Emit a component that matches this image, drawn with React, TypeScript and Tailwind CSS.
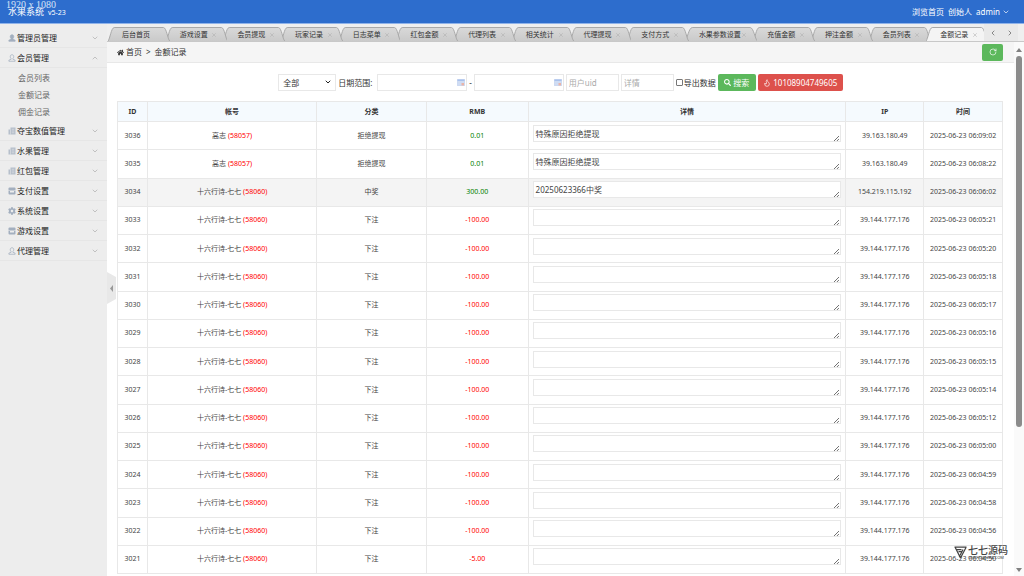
import { useState } from 'react';
import { ChevronDown, ChevronLeft, ChevronRight, ChevronUp, Flame, RotateCw, X } from 'lucide-react';
import { FaCog, FaHome, FaSearch } from 'react-icons/fa';

interface MenuItem {
  label: string;
  icon: 'admin' | 'user' | 'paper' | 'card' | 'cog';
  children?: string[];
}

interface LogRow {
  id: number;
  name: string;
  uid: number;
  type: string;
  amount: string;
  detail: string;
  ip: string;
  time: string;
}

const menu: MenuItem[] = [
  { label: '管理员管理', icon: 'admin' },
  { label: '会员管理', icon: 'user', children: ['会员列表', '金额记录', '佣金记录'] },
  { label: '夺宝数值管理', icon: 'paper' },
  { label: '水果管理', icon: 'paper' },
  { label: '红包管理', icon: 'paper' },
  { label: '支付设置', icon: 'card' },
  { label: '系统设置', icon: 'cog' },
  { label: '游戏设置', icon: 'card' },
  { label: '代理管理', icon: 'user' },
];

const tabs = [
  '后台首页', '游戏设置', '会员提现', '玩家记录', '日志菜单', '红包金额', '代理列表', '相关统计',
  '代理提现', '支付方式', '水果参数设置', '充值金额', '押注金额', '会员列表', '金额记录',
];

const bet = (id: number, time: string, amount = '-100.00'): LogRow => ({
  id,
  name: '十六行诗-七七',
  uid: 58060,
  type: '下注',
  amount,
  detail: '',
  ip: '39.144.177.176',
  time: `2025-06-23 ${time}`,
});

const rows: LogRow[] = [
  { id: 3036, name: '高志', uid: 58057, type: '拒绝提现', amount: '0.01', detail: '特殊原因拒绝提现', ip: '39.163.180.49', time: '2025-06-23 06:09:02' },
  { id: 3035, name: '高志', uid: 58057, type: '拒绝提现', amount: '0.01', detail: '特殊原因拒绝提现', ip: '39.163.180.49', time: '2025-06-23 06:08:22' },
  { id: 3034, name: '十六行诗-七七', uid: 58060, type: '中奖', amount: '300.00', detail: '20250623366中奖', ip: '154.219.115.192', time: '2025-06-23 06:06:02' },
  bet(3033, '06:05:21'),
  bet(3032, '06:05:20'),
  bet(3031, '06:05:18'),
  bet(3030, '06:05:17'),
  bet(3029, '06:05:16'),
  bet(3028, '06:05:15'),
  bet(3027, '06:05:14'),
  bet(3026, '06:05:12'),
  bet(3025, '06:05:00'),
  bet(3024, '06:04:59'),
  bet(3023, '06:04:58'),
  bet(3022, '06:04:56'),
  bet(3021, '06:04:50', '-5.00'),
];

function MenuIcon({ icon }: { icon: MenuItem['icon'] }) {
  if (icon === 'cog') return <FaCog className="size-2" />;
  if (icon === 'paper') {
    return (
      <svg viewBox="0 0 16 16" className="size-2">
        <path d="M5 1h10v14H1V5h4z" fill="currentColor" fillOpacity=".75" />
        <path d="M5 5v10M7.500 4.500h5M7.500 8h5M7.500 11.500h5" stroke="#ededed" strokeWidth="1" />
      </svg>
    );
  }
  if (icon === 'card') {
    return (
      <svg viewBox="0 0 16 16" className="size-2" fill="currentColor">
        <path d="M3 1h10a2 2 0 0 1 2 2v3H1V3a2 2 0 0 1 2-2z" />
        <path d="M1 7h14v6a2 2 0 0 1-2 2H3a2 2 0 0 1-2-2zM4 8v3h8V8z" fillRule="evenodd" />
      </svg>
    );
  }
  const solid = icon === 'admin';
  return (
    <svg viewBox="0 0 16 16" className="size-2" fill={solid ? 'currentColor' : 'none'} stroke="currentColor" strokeWidth="1.5">
      <path d="M8 1.500c2.300 0 3.500 1.600 3.500 3.800 0 1.700-.7 3-1.700 3.800v1.400l4.400 1.800v2.200H1.800v-2.200l4.400-1.800V9.100C5.200 8.300 4.500 7 4.500 5.300 4.500 3.100 5.700 1.500 8 1.500z" />
    </svg>
  );
}

function Header() {
  return (
    <header className="relative flex h-6 shrink-0 items-center justify-between border-b border-[#8fb3ea] bg-[#2d6dcd] px-2 text-white">
      <div className="flex items-baseline gap-1 pt-0.5">
        <h1 className="text-[9px] leading-3">水果系统</h1>
        <span className="text-[7px] leading-3">v5-23</span>
      </div>
      <nav className="flex items-center gap-1 pr-1.5">
        <a href="#home">浏览首页</a>
        <span>创始人</span>
        <button type="button" className="flex items-center gap-0.5">
          admin
          <ChevronDown className="size-2" />
        </button>
      </nav>
      <span className="absolute top-0 left-1.5 font-['Liberation_Serif',serif] text-[10px] leading-[9px] text-[#d5e3f8]">
        1920 x 1080
      </span>
    </header>
  );
}

function Sidebar() {
  return (
    <aside className="w-[107px] shrink-0 bg-[#ededed] pt-1">
      <ul>
        {menu.map((item) => (
          <li key={item.label}>
            <button
              type="button"
              className="flex h-5 w-full items-center gap-px border-b border-[#e6e6e6] pr-2 pl-2 text-[#222]"
            >
              <span className="text-[#a3afbf]">
                <MenuIcon icon={item.icon} />
              </span>
              <span className="flex-1 text-left">{item.label}</span>
              {item.children ? (
                <ChevronUp className="size-2 text-[#aaa]" />
              ) : (
                <ChevronDown className="size-2 text-[#aaa]" />
              )}
            </button>
            {item.children && (
              <ul className="pt-px pb-px">
                {item.children.map((child) => (
                  <li key={child}>
                    <a href="#child" className="block pl-[18px] leading-[17px] text-[#666]">
                      {child}
                    </a>
                  </li>
                ))}
              </ul>
            )}
          </li>
        ))}
      </ul>
    </aside>
  );
}

function TabBar({ active, onSelect }: { active: string; onSelect: (tab: string) => void }) {
  return (
    <div className="flex h-[18px] shrink-0 items-end border-b border-[#c8c8c8] bg-[#efefef] pl-px">
      <div className="isolate flex flex-1">
        {tabs.map((tab, i) => {
          const isActive = tab === active;
          return (
            <div
              key={tab}
              className={`relative flex h-3.5 basis-0 items-center pt-px pl-3.5 ${tab.length > 4 ? 'grow-[71]' : 'grow-[57]'}`}
              style={{ zIndex: isActive ? tabs.length + 1 : tabs.length - i }}
            >
              <svg
                viewBox="0 0 60 14"
                preserveAspectRatio="none"
                className="absolute inset-y-0 left-0 -z-10 h-full w-[calc(100%+4px)]"
              >
                <defs>
                  <linearGradient id={`tab-${i}`} x1="0" y1="0" x2="0" y2="1">
                    <stop offset="0" stopColor={isActive ? '#f4f4f4' : '#d9d9d9'} />
                    <stop offset="1" stopColor={isActive ? '#f4f4f4' : '#cacaca'} />
                  </linearGradient>
                </defs>
                <path
                  d="M0 14C2 12 3 1 6 .5H54C57 1 58 12 60 14"
                  fill={`url(#tab-${i})`}
                  stroke="#a9a9a9"
                  strokeWidth="1"
                  vectorEffect="non-scaling-stroke"
                />
              </svg>
              <button
                type="button"
                onClick={() => onSelect(tab)}
                className="flex-1 text-left text-[7px] whitespace-nowrap text-[#333]"
              >
                {tab}
              </button>
              {i > 0 && (
                <button type="button" aria-label={`关闭 ${tab}`} className="pr-1.5 text-[#aaa]">
                  <X className="size-1.5" />
                </button>
              )}
            </div>
          );
        })}
      </div>
      <div className="z-10 mr-1.5 flex h-full w-[34px] items-center justify-around bg-[#e9e9e9] text-[#555]">
        <button type="button" aria-label="向左">
          <ChevronLeft className="size-2" />
        </button>
        <button type="button" aria-label="向右">
          <ChevronRight className="size-2" />
        </button>
      </div>
    </div>
  );
}

function CalendarIcon() {
  return (
    <svg viewBox="0 0 16 14" className="h-[7px] w-2 shrink-0">
      <rect x=".5" y=".5" width="15" height="13" rx="1" fill="#cfdcf3" stroke="#b4c7ea" />
      <path d="M1 1h14v3H1z" fill="#a9c1ec" />
      <path d="M9 8h5v5H9z" fill="#eab4a8" />
    </svg>
  );
}

function DateField({ id, label }: { id: string; label: string }) {
  return (
    <span className="flex h-[17px] w-[90px] items-center border border-[#e8e8e8] bg-white pr-px">
      <input id={id} type="text" aria-label={label} className="h-full w-full min-w-0 px-1 outline-none" />
      <CalendarIcon />
    </span>
  );
}

function SearchForm() {
  return (
    <form className="flex items-center justify-center gap-0.5 pt-[11px] pb-2.5" onSubmit={(e) => e.preventDefault()}>
      <div className="relative">
        <select
          aria-label="分类"
          className="h-[17px] w-[58px] appearance-none border border-[#e8e8e8] bg-white pl-1 outline-none"
        >
          <option>全部</option>
        </select>
        <ChevronDown className="pointer-events-none absolute top-1 right-1 size-2 text-[#222]" strokeWidth={3} />
      </div>
      <label htmlFor="date-from" className="w-[37px] whitespace-nowrap">
        日期范围:
      </label>
      <DateField id="date-from" label="开始日期" />
      <span>-</span>
      <DateField id="date-to" label="结束日期" />
      <input
        type="text"
        aria-label="用户uid"
        placeholder="用户uid"
        className="h-[17px] w-[53px] border border-[#e8e8e8] px-0.5 outline-none placeholder:text-[#aaa]"
      />
      <input
        type="text"
        aria-label="详情"
        placeholder="详情"
        className="h-[17px] w-[53px] border border-[#e8e8e8] px-0.5 outline-none placeholder:text-[#aaa]"
      />
      <label className="flex items-center gap-px whitespace-nowrap">
        <input type="checkbox" className="size-[7px] appearance-none rounded-[1px] border border-[#777] checked:bg-[#2d6dcd]" />
        导出数据
      </label>
      <button type="submit" className="flex h-[17px] w-[38px] items-center justify-center gap-0.5 rounded-xs bg-[#5cb85c] text-white">
        <FaSearch className="size-[7px]" />
        搜索
      </button>
      <button type="button" className="flex h-[17px] w-[85px] items-center justify-center gap-0.5 rounded-xs bg-[#dd514c] text-white">
        <Flame className="size-2" />
        10108904749605
      </button>
    </form>
  );
}

function LogTable() {
  return (
    <table className="h-full w-full table-fixed border-collapse text-center text-[7px] leading-3 text-[#444]">
      <colgroup>
        <col className="w-[3.4%]" />
        <col className="w-[19.1%]" />
        <col className="w-[12.4%]" />
        <col className="w-[11.5%]" />
        <col className="w-[35.9%]" />
        <col className="w-[8.8%]" />
        <col className="w-[8.9%]" />
      </colgroup>
      <thead>
        <tr className="h-5 bg-[#f5fafe] text-[#333]">
          {['ID', '帐号', '分类', 'RMB', '详情', 'IP', '时间'].map((title) => (
            <th key={title} className="h-5 border border-[#e8e8e8] p-0 font-bold">
              {title}
            </th>
          ))}
        </tr>
      </thead>
      <tbody>
        {rows.map((row) => (
          <tr key={row.id} className={row.id === 3034 ? 'bg-[#f4f4f4]' : 'bg-white'}>
            <td className="border border-[#e8e8e8] p-0">{row.id}</td>
            <td className="border border-[#e8e8e8] p-0">
              {row.name} <span className="text-[#f00]">({row.uid})</span>
            </td>
            <td className="border border-[#e8e8e8] p-0">{row.type}</td>
            <td className={`border border-[#e8e8e8] p-0 ${row.amount.startsWith('-') ? 'text-[#f00]' : 'text-[#008000]'}`}>
              {row.amount}
            </td>
            <td className="border border-[#e8e8e8] px-1 pt-0 pb-[5px]">
              <div className="relative h-[17px]">
                <textarea
                  aria-label={`详情 ${row.id}`}
                  defaultValue={row.detail}
                  className="block h-full w-full resize-none overflow-hidden border border-[#e8e8e8] bg-white px-0.5 text-[8px] leading-[15px] outline-none"
                />
                <svg viewBox="0 0 6 6" className="absolute right-0.5 bottom-px size-[5px]" stroke="#555" fill="none">
                  <path d="M0 6L6 0M3.500 6L6 3.500" />
                </svg>
              </div>
            </td>
            <td className="border border-[#e8e8e8] p-0">{row.ip}</td>
            <td className="border border-[#e8e8e8] p-0 whitespace-nowrap">{row.time}</td>
          </tr>
        ))}
      </tbody>
    </table>
  );
}

function ScrollBar() {
  return (
    <div className="flex w-2.5 shrink-0 flex-col items-center bg-[#fafafa] pt-1.5 pb-1">
      <svg viewBox="0 0 6 4" className="h-1 w-1.5" fill="#808080">
        <path d="M3 0l3 4H0z" />
      </svg>
      <div className="flex w-full flex-1 justify-center pt-1 pb-1">
        <div className="h-[73%] w-1.5 rounded-full bg-[#8b8b8b]" />
      </div>
      <svg viewBox="0 0 6 4" className="h-1 w-1.5" fill="#808080">
        <path d="M0 0h6L3 4z" />
      </svg>
    </div>
  );
}

function Watermark() {
  return (
    <div className="pointer-events-none absolute right-4 bottom-4 flex items-center gap-px text-[#444]">
      <svg viewBox="0 0 26 26" className="size-[13px]" fill="none" stroke="currentColor" strokeWidth="2.500">
        <path d="M1 2h24M4 7h11M13 24L2 2M13 24L24 3M18 7l-6 12M9 11h6" />
      </svg>
      <div className="flex flex-col">
        <span className="text-[10px] leading-[11px] font-medium">七七源码</span>
        <span className="text-[4px] leading-[4px] whitespace-nowrap">QIQIYUANMA.COM</span>
      </div>
    </div>
  );
}

export default function App() {
  const [active, setActive] = useState('金额记录');

  return (
    <div className="relative flex h-screen flex-col overflow-hidden bg-white font-['Noto_Sans','Noto_Sans_CJK_SC',sans-serif] text-[8px] leading-3 text-[#333]">
      <Header />
      <div className="flex min-h-0 flex-1">
        <Sidebar />
        <div className="relative flex min-w-0 flex-1 flex-col">
          <TabBar active={active} onSelect={setActive} />
          <div className="flex min-h-0 flex-1">
            <main className="flex min-w-0 flex-1 flex-col">
              <div className="flex h-[21px] shrink-0 items-center justify-between border-b border-[#e8e8e8] bg-[#f5f5f5] pr-[11px] pl-2.5">
                <nav className="flex items-center gap-1">
                  <span className="flex items-center gap-0.5">
                    <FaHome className="size-[7px]" />
                    <a href="#home">首页</a>
                  </span>
                  <span>&gt;</span>
                  <span>金额记录</span>
                </nav>
                <button
                  type="button"
                  aria-label="刷新"
                  className="flex h-[17px] w-[21px] items-center justify-center rounded-xs bg-[#5cb85c] text-white"
                >
                  <RotateCw className="size-2" />
                </button>
              </div>
              <SearchForm />
              <div className="min-h-0 flex-1 pr-[11px] pb-0.5 pl-2.5">
                <LogTable />
              </div>
            </main>
            <ScrollBar />
          </div>
          <button type="button" aria-label="收起菜单" className="absolute top-[248px] left-0 h-8 w-[9px]">
            <svg viewBox="0 0 9 32" className="h-full w-full">
              <path d="M0 0l9 5v22l-9 5z" fill="#e8e8e8" />
              <path d="M6 13v7l-3-3.500z" fill="#999" />
            </svg>
          </button>
        </div>
      </div>
      <Watermark />
    </div>
  );
}
